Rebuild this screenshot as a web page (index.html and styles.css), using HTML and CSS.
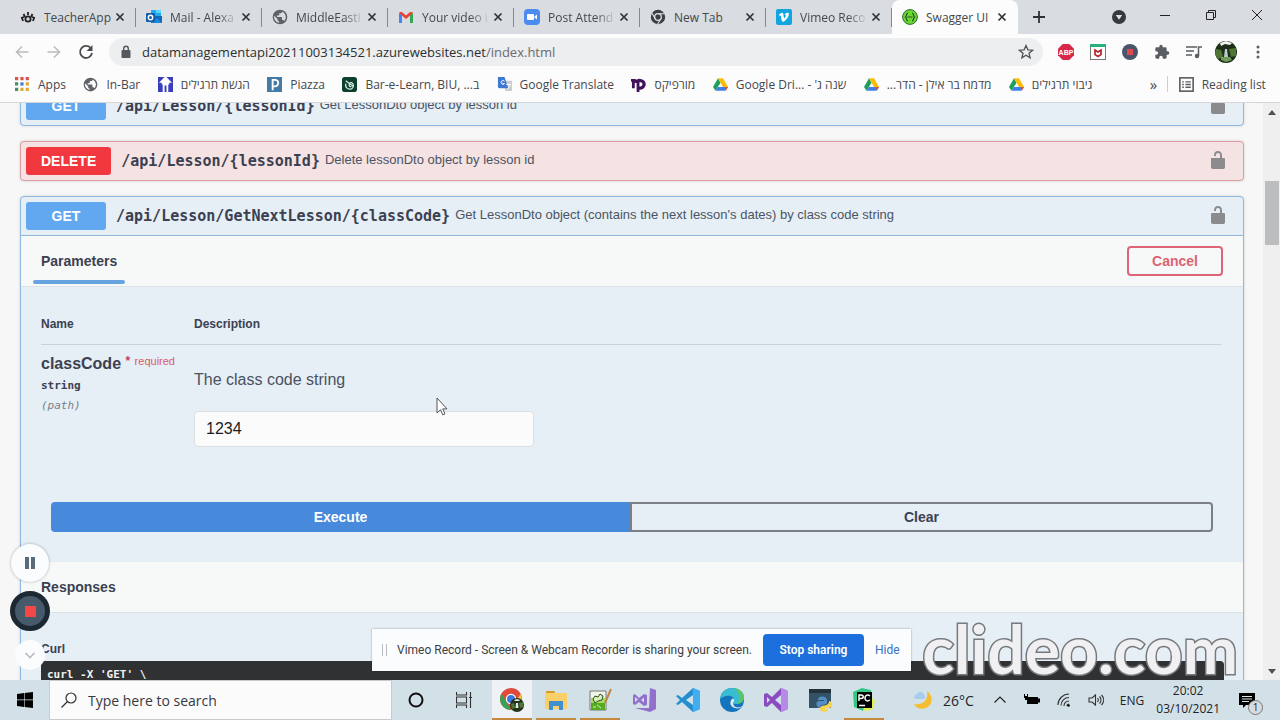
FILE: index.html
```html
<!DOCTYPE html>
<html lang="en">
<head>
<meta charset="utf-8">
<title>Swagger UI</title>
<link rel="stylesheet" href="styles.css">
</head>
<body>
<svg class="defs" aria-hidden="true">
  <symbol id="close" viewBox="0 0 10 10"><path d="M1.5 1.5l7 7M8.500 1.500l-7 7" stroke="#2f3337" stroke-width="1.700"/></symbol>
  <symbol id="globe" viewBox="0 0 24 24"><path fill="#5f6368" d="M12 1a11 11 0 100 22 11 11 0 000-22zm-1.500 19.800A9 9 0 013.300 10l5 5v1.200c0 1.200 1 2.200 2.200 2.200zm7.800-2.800c-.3-.9-1.100-1.500-2.100-1.500h-1.100v-3.400c0-.6-.5-1.100-1.100-1.100H7.500V9.800h2.300c.6 0 1.100-.5 1.100-1.100V6.500h2.200c1.200 0 2.200-1 2.200-2.200v-.5a9 9 0 013 14.200z"/></symbol>
  <symbol id="drive" viewBox="0 0 24 22"><path fill="#1e9e5a" d="M8 1L0 15l4 6L12 8z"/><path fill="#fbbc04" d="M8 1h8l8 14h-8z"/><path fill="#3f7fe8" d="M4 21l4-6h16l-4 6z"/><path fill="#e6502f" d="M18.500 15H24l-3 5z"/></symbol>
  <symbol id="unlock" viewBox="0 0 20 20"><path fill="#8b8b8d" d="M15.800 8H14V5.600C14 2.700 12.700 1 10 1 7.200 1 6 2.700 6 5.600V6h2v-.8C8 3.700 8.600 3 10 3s2 .8 2 2.200V8H4c-.6 0-1 .6-1 1.200v8.100C3 18.500 3.700 19 5 19h10c1.300 0 2-.6 2-1.800V9.200C17 8.600 16.400 8 15.800 8z"/></symbol>
</svg>

<header class="browser">
  <nav class="tabs">
    <div class="tab"><svg class="fav" viewBox="0 0 16 16"><g stroke="#222" fill="none" stroke-width="1.800"><circle cx="8" cy="10" r="2.600"/><path d="M3 12l-1-3M5 8L3.500 5M8 6V3M11 8l1.500-3M13 12l1-3M1 9l3-1M15 9l-3-1"/></g></svg><span class="tab-name">TeacherApp</span><button class="close" aria-label="Close TeacherApp"><svg><use href="#close"/></svg></button></div>
    <div class="tab"><svg class="fav" viewBox="0 0 16 16"><path fill="#28a8ea" d="M5 1h10v6H5z"/><path fill="#1068b8" d="M5 7h11v7H5z"/><path fill="#50d9ff" d="M10 1h5v3h-5z"/><path fill="#1a88dc" d="M5 14l6-5 5 5z"/><rect y="4" width="9" height="9" rx="1" fill="#0f5fae"/><circle cx="4.500" cy="8.500" r="2.200" fill="none" stroke="#fff" stroke-width="1.400"/></svg><span class="tab-name">Mail - Alexa</span><button class="close" aria-label="Close Mail"><svg><use href="#close"/></svg></button></div>
    <div class="tab"><svg class="fav"><use href="#globe"/></svg><span class="tab-name">MiddleEastI</span><button class="close" aria-label="Close MiddleEast"><svg><use href="#close"/></svg></button></div>
    <div class="tab"><svg class="fav" viewBox="0 0 16 16"><path fill="#4285f4" d="M1 4l3 2v8H1z"/><path fill="#34a853" d="M12 6l3-2v10h-3z"/><path fill="#ea4335" d="M1 4l1-1h2l4 3.500L12 3h2l1 1-7 6z"/></svg><span class="tab-name">Your video i</span><button class="close" aria-label="Close Your video"><svg><use href="#close"/></svg></button></div>
    <div class="tab"><svg class="fav" viewBox="0 0 16 16"><rect width="16" height="16" rx="4" fill="#4a8cf0"/><rect x="3" y="5" width="7" height="6" rx="1" fill="#fff"/><path fill="#fff" d="M10.500 7.500L13 5.500v5l-2.500-2z"/></svg><span class="tab-name">Post Attend</span><button class="close" aria-label="Close Post Attendee"><svg><use href="#close"/></svg></button></div>
    <div class="tab"><svg class="fav" viewBox="0 0 16 16"><circle cx="8" cy="8" r="7.200" fill="#3c4043"/><circle cx="8" cy="8" r="3.300" fill="#3c4043" stroke="#dee1e6" stroke-width="1.300"/><path d="M8 4.700h6.500M5.200 9.700L2 4.300M10.800 9.700L7.600 15" stroke="#dee1e6" stroke-width="1.100"/></svg><span class="tab-name whole">New Tab</span><button class="close" aria-label="Close New Tab"><svg><use href="#close"/></svg></button></div>
    <div class="tab"><svg class="fav" viewBox="0 0 16 16"><rect width="16" height="16" rx="2" fill="#13a5df"/><path fill="#fff" d="M3 5.800c1-1 2.300-2.200 3.300-2 1.400.2 1.200 3.500 1.700 5 .3.700.8.200 1.600-1.300.6-1.200.2-1.800-.9-1.400.6-2 2-2.700 3.300-2.400 1.400.4 1 2.300 0 4.200C11 9.800 8.500 12.700 7.200 12.700c-2 0-1.900-4.800-2.500-6-.2-.4-.6-.2-1.200.2z"/></svg><span class="tab-name">Vimeo Reco</span><button class="close" aria-label="Close Vimeo"><svg><use href="#close"/></svg></button></div>
    <div class="tab active"><svg class="fav" viewBox="0 0 16 16"><circle cx="8" cy="8" r="7.400" fill="#6bd832" stroke="#2f6b2f"/><path d="M6 4c-2 0-1 3-2.500 4C5 9 4 12 6 12M10 4c2 0 1 3 2.500 4C11 9 12 12 10 12M5.500 8h5" fill="none" stroke="#24502c" stroke-width="1.200"/></svg><span class="tab-name whole">Swagger UI</span><button class="close" aria-label="Close Swagger UI"><svg><use href="#close"/></svg></button></div>
    <button class="new-tab" aria-label="New tab"><svg viewBox="0 0 12 12"><path d="M6 0v12M0 6h12" stroke="#2f3337" stroke-width="1.800"/></svg></button>
    <div class="window-buttons">
      <button aria-label="Search tabs"><svg viewBox="0 0 14 14"><circle cx="7" cy="7" r="7" fill="#36393e"/><path fill="#dee1e6" d="M3.800 5h6.400L7 9.800z"/></svg></button>
      <button aria-label="Minimize"><svg viewBox="0 0 14 14"><path d="M2 7.500h10" stroke="#222"/></svg></button>
      <button aria-label="Restore"><svg viewBox="0 0 14 14"><path d="M2.500 4.500h7v7h-7zM4.500 4V2.500h7v7H10" fill="none" stroke="#222"/></svg></button>
      <button aria-label="Close window"><svg viewBox="0 0 14 14"><path d="M2 2l10 10M12 2L2 12" stroke="#222"/></svg></button>
    </div>
  </nav>
  <div class="toolbar">
    <button class="tool" aria-label="Back"><svg viewBox="0 0 16 16"><path d="M14.500 8H2.500M8 2.500L2.500 8 8 13.500" fill="none" stroke="#b9bbbe" stroke-width="1.500"/></svg></button>
    <button class="tool" aria-label="Forward"><svg viewBox="0 0 16 16"><path d="M1.500 8h12M8 2.500L13.500 8 8 13.500" fill="none" stroke="#b9bbbe" stroke-width="1.500"/></svg></button>
    <button class="tool" aria-label="Reload"><svg viewBox="0 0 16 16"><path d="M13 4.500A6 6 0 1014 9" fill="none" stroke="#494c50" stroke-width="1.800"/><path fill="#494c50" d="M14.500 1v6h-6z"/></svg></button>
    <div class="address">
      <svg class="padlock" viewBox="0 0 12 14"><rect x="1.500" y="5" width="9" height="8" rx="1" fill="#55585c"/><path d="M3.700 6V3.500a2.300 2.300 0 014.600 0V6" fill="none" stroke="#55585c" stroke-width="1.400"/></svg>
      <span class="url">datamanagementapi20211003134521.azurewebsites.net<span class="path">/index.html</span></span>
      <button class="star" aria-label="Bookmark"><svg viewBox="0 0 16 16"><path d="M8 1.500l1.900 4.300 4.700.4-3.600 3 1.100 4.600L8 11.300l-4.100 2.500L5 9.200l-3.600-3 4.700-.4z" fill="none" stroke="#4f5257" stroke-width="1.300"/></svg></button>
    </div>
    <button class="tool" aria-label="Adblock Plus"><svg viewBox="0 0 16 16"><path fill="#d8284a" d="M4.700 0h6.600L16 4.700v6.600L11.300 16H4.700L0 11.300V4.700z"/><text x="8" y="10.500" class="abp">ABP</text></svg></button>
    <button class="tool" aria-label="McAfee"><svg viewBox="0 0 16 16"><rect x=".5" y=".5" width="15" height="15" fill="#fff" stroke="#777"/><path fill="#27b17c" d="M0 0h16v3H0z"/><path d="M5 6v4.500l3 2 3-2V6L8 8z" fill="none" stroke="#b5272d" stroke-width="1.700"/></svg></button>
    <button class="tool" aria-label="Vimeo Record"><svg viewBox="0 0 16 16"><circle cx="8" cy="8" r="8" fill="#4a5668"/><rect x="5" y="5" width="6" height="6" fill="#e04a4f"/></svg></button>
    <button class="tool" aria-label="Extensions"><svg viewBox="0 0 24 24"><path fill="#5a5d61" d="M20.500 11H19V7a2 2 0 00-2-2h-4V3.500a2.500 2.500 0 00-5 0V5H4a2 2 0 00-2 2v3.800h1.500a2.700 2.700 0 010 5.400H2V20c0 1.100.9 2 2 2h3.800v-1.500a2.700 2.700 0 015.400 0V22H17a2 2 0 002-2v-4h1.500a2.500 2.500 0 000-5z"/></svg></button>
    <button class="tool" aria-label="Media"><svg viewBox="0 0 16 16"><path d="M0 3h11M0 7h8M0 11h6M12.500 12V3H16" fill="none" stroke="#5a5d61" stroke-width="1.500"/><circle cx="11" cy="12" r="2.200" fill="#5a5d61"/></svg></button>
    <button class="tool avatar" aria-label="Profile"><svg viewBox="0 0 22 22"><circle cx="11" cy="11" r="11" fill="#1d2d17"/><path fill="#507634" d="M1 8l5 1 2 7-5 2-3-5zM14 8l7-1v8l-5 1z"/><path fill="#f0f3f1" d="M5 2l6-2 6 2-2 2-5-1-4 2z"/><path fill="#b7cfcb" d="M10 8h2l1 8H9z"/><path fill="#719b5b" d="M6 16h9l2 3-6 2-5-2z"/></svg></button>
    <button class="tool" aria-label="Menu"><svg viewBox="0 0 16 16"><g fill="#5a5d61"><circle cx="8" cy="3" r="1.500"/><circle cx="8" cy="8" r="1.500"/><circle cx="8" cy="13" r="1.500"/></g></svg></button>
  </div>
  <nav class="bookmarks">
    <a href="#"><svg viewBox="0 0 14 14"><path fill="#d9534a" d="M0 0h3v3H0zM5 0h3v3H5zM10 0h3v3h-3z"/><path fill="#4b8b63" d="M0 5h3v3H0zM0 10h3v3H0z"/><path fill="#437bd1" d="M5 5h3v3H5z"/><path fill="#dfaa35" d="M10 5h3v3h-3zM5 10h3v3H5zM10 10h3v3h-3z"/></svg>Apps</a>
    <a href="#"><svg><use href="#globe"/></svg>In-Bar</a>
    <a href="#"><svg viewBox="0 0 16 16"><path fill="#3a3ebd" d="M0 0h7L1 6h3v2H0zM9 0h7v8h-4V6h3zM0 8h5v8H0zM11 8h5v8h-5zM7 9h2v7H7z"/></svg><bdi>הגשת תרגילים</bdi></a>
    <a href="#"><svg viewBox="0 0 16 16"><rect width="16" height="16" fill="#437aa6"/><path d="M6 14V3h2.500a3.300 3.300 0 010 7H6" fill="none" stroke="#fff" stroke-width="2"/></svg>Piazza</a>
    <a href="#"><svg viewBox="0 0 16 16"><rect width="16" height="16" rx="3" fill="#0c3f2d"/><path d="M4 4l8 6M4 7c-1 5 3 6 5 6s4-3 3-5-3-3-4-1 0 4 2 3" fill="none" stroke="#d9f1e5" stroke-width="1.300"/></svg>Bar-e-Learn, BIU, ...ב</a>
    <a href="#"><svg viewBox="0 0 16 16"><path fill="#c9cdd2" d="M6 4h10v11H9z"/><path fill="#3f78d4" d="M1 0h7l4 12H3a2 2 0 01-2-2z"/><path d="M8 4.500A2 2 0 108 7H6M10 8h5M12 7v2M11 13l3-4" fill="none" stroke="#fff"/></svg>Google Translate</a>
    <a href="#"><svg viewBox="0 0 16 16"><path fill="#41135b" d="M0 2h4a3 3 0 012 1 6 6 0 014-1 5.500 5.500 0 010 11.500H9V16H6V7c0-1-2-1-2 0v5H1V5H0z"/><path fill="#fff" d="M9 5.500h1a2.300 2.300 0 010 4.600H9z"/></svg><bdi>מורפיקס</bdi></a>
    <a href="#"><svg><use href="#drive"/></svg><bdi dir="ltr">Google Dri... - 'שנה ג</bdi></a>
    <a href="#"><svg><use href="#drive"/></svg><bdi dir="rtl">מדמח בר אילן - הדר...</bdi></a>
    <a href="#"><svg><use href="#drive"/></svg><bdi>גיבוי תרגילים</bdi></a>
    <button class="more">»</button>
    <button class="reading"><svg viewBox="0 0 14 14"><rect x=".8" y=".8" width="12.400" height="12.400" fill="none" stroke="#5a5d61" stroke-width="1.500"/><path d="M3 4.500h1.500M6 4.500h5M3 7h1.500M6 7h5M3 9.500h1.500M6 9.500h5" stroke="#5a5d61" stroke-width="1.300"/></svg>Reading list</button>
  </nav>
</header>

<div class="viewport">
  <main class="api">
    <section class="op get">
      <div class="summary"><span class="method">GET</span><span class="route">/api/Lesson/{lessonId}</span><span class="about">Get LessonDto object by lesson id</span><button class="lock" aria-label="Authorize"><svg><use href="#unlock"/></svg></button></div>
    </section>
    <section class="op delete">
      <div class="summary"><span class="method">DELETE</span><span class="route">/api/Lesson/{lessonId}</span><span class="about">Delete lessonDto object by lesson id</span><button class="lock" aria-label="Authorize"><svg><use href="#unlock"/></svg></button></div>
    </section>
    <section class="op get open">
      <div class="summary"><span class="method">GET</span><span class="route">/api/Lesson/GetNextLesson/{classCode}</span><span class="about">Get LessonDto object (contains the next lesson's dates) by class code string</span><button class="lock" aria-label="Authorize"><svg><use href="#unlock"/></svg></button></div>
      <div class="band"><h4 class="params-tab">Parameters</h4><button class="cancel">Cancel</button></div>
      <div class="params">
        <table>
          <thead><tr><th class="name-col">Name</th><th>Description</th></tr></thead>
          <tbody><tr>
            <td><label class="param" for="code">classCode <span class="star-mark">*</span> <span class="required">required</span></label><div class="type">string</div><div class="place">(path)</div></td>
            <td><p class="desc">The class code string</p><input id="code" type="text" value="1234"></td>
          </tr></tbody>
        </table>
      </div>
      <div class="actions"><button class="execute">Execute</button><button class="clear">Clear</button></div>
      <div class="band"><h4>Responses</h4></div>
      <div class="responses"><h5>Curl</h5><pre>curl -X 'GET' \</pre></div>
    </section>
  </main>
  <div class="scrollbar"><svg viewBox="0 0 8 5"><path fill="#505050" d="M0 5l4-5 4 5z"/></svg><span class="thumb"></span><svg viewBox="0 0 8 5"><path fill="#505050" d="M0 0l4 5 4-5z"/></svg></div>

  <div class="recorder">
    <button class="pause" aria-label="Pause"><svg viewBox="0 0 12 12"><path fill="#596a78" d="M1 0h4v12H1zM7 0h4v12H7z"/></svg></button>
    <button class="stop" aria-label="Stop"><span></span></button>
    <button class="fold" aria-label="Collapse"><svg viewBox="0 0 12 12"><path d="M1.500 4L6 8.500 10.500 4" fill="none" stroke="#b5bbc1" stroke-width="1.600"/></svg></button>
  </div>
  <div class="share"><span class="grip"></span><span class="share-text">Vimeo Record - Screen &amp; Webcam Recorder is sharing your screen.</span><button class="stop-share">Stop sharing</button><button class="hide">Hide</button></div>
  <div class="watermark">clideo.com</div>
  <svg class="cursor" viewBox="0 0 12 19"><path d="M1 1v15l3.500-3.300 2.300 5.200 2.200-1-2.300-5H11z" fill="#fff" stroke="#555"/></svg>
</div>

<footer class="taskbar">
  <button class="start" aria-label="Start"><svg viewBox="0 0 16 16"><path d="M0 2l7-1v6.600H0zM7.600 1L16 0v7.600H7.600zM0 8.300h7V15l-7-1zM7.600 8.300H16V16l-8.400-1z"/></svg></button>
  <label class="search"><svg viewBox="0 0 16 16"><circle cx="10" cy="6" r="5" fill="none" stroke="#333" stroke-width="1.200"/><path d="M6.500 9.500L.5 15.500" stroke="#333" stroke-width="1.300"/></svg><input type="text" placeholder="Type here to search" aria-label="Search"></label>
  <button class="sys" aria-label="Cortana"><svg viewBox="0 0 16 16"><circle cx="8" cy="8" r="6.500" fill="none" stroke="#111" stroke-width="2"/></svg></button>
  <button class="sys" aria-label="Task view"><svg viewBox="0 0 16 16"><path d="M.5 0v3h10V0M.5 5h10v6H.5zM.5 16v-3h10v3M14.500 0v16M13 5.500h3" fill="none" stroke="#333" stroke-width="1.100"/></svg></button>
  <div class="apps">
    <button class="running current" aria-label="Chrome"><svg viewBox="0 0 24 24"><circle cx="11" cy="11" r="11" fill="#e04a3d"/><path fill="#35a353" d="M1.500 5.500L11 21.900A11 11 0 011.500 5.500z"/><path fill="#f7c93a" d="M11 22l5-9 4.500-7A11 11 0 0111 22z"/><circle cx="11" cy="11" r="5.200" fill="#fff"/><circle cx="11" cy="11" r="4" fill="#3a7ae0"/><circle cx="17" cy="17" r="7" fill="#24331c"/><path fill="#507634" d="M11 16l3-1 1 5-3 1zM19 15l4-1v5l-3 1z"/><path fill="#dce8e4" d="M14 12l3-1 3 1-1 1h-4zM16 15h2l.5 5h-3z"/></svg></button>
    <button class="running" aria-label="File Explorer"><svg viewBox="0 0 24 24"><path fill="#d79a29" d="M2 3h8l2 3H2z"/><path fill="#f9d067" d="M1 5h22v16H1z"/><path fill="#418fd0" d="M5 13h14v9h-4v-4H9v4H5z"/></svg></button>
    <button class="running" aria-label="Notepad++"><svg viewBox="0 0 24 24"><path fill="#f0f5e8" stroke="#777" d="M2 3h16v19H2z"/><path fill="#a7dc5a" d="M3 10h14v6H3z"/><path fill="#55ab22" d="M3 15h14v7H3z"/><path d="M5 11l2-3 3 1 2-3 3 2-1 4-4 1-3 2z" fill="#d9f0b8" stroke="#294d2a"/><path d="M5 19h3M9 17l4 3" fill="none" stroke="#d8f2bd"/><path d="M23 1l-6 14" stroke="#bd8746" stroke-width="2"/></svg></button>
    <button aria-label="Blend"><svg viewBox="0 0 24 24"><path fill="#9270cc" d="M18 0l6 2v19l-6 3-15-4 14 0zM1 7l2-1 4 4 5-4 3 1v10l-3 1-5-4-4 3-2-1zm2 2v5l3-2.500zm9 .5L9 12l3 2.500z"/></svg></button>
    <button aria-label="VS Code"><svg viewBox="0 0 24 24"><path fill="#248fcf" d="M17 0l7 3v18l-7 3L6 14l-4 3-2-1 4-4-4-4 2-1 4 3zm0 7l-7 5 7 5z"/><path fill="#40aef0" d="M17 0l7 3v18l-7 3z"/></svg></button>
    <button aria-label="Edge"><svg viewBox="0 0 24 24"><circle cx="12" cy="12" r="12" fill="#1474bd"/><path fill="#39bcd0" d="M0 11C1 3 7 0 12 0c8 0 12 5 12 9 0 5-4 7-8 7-3 0-3-1-2-3 2-5-7-8-14-2z"/><path fill="#5bc46c" d="M14 0c6 1 10 5 10 9 0 5-4 7-7 7 4-4 3-11-3-16z"/><path fill="#dcebef" d="M14 13c-3 6 4 8 9 5-2 2-5 3-8 2-5-1-6-6-3-9 1-1 3 0 2 2z"/></svg></button>
    <button aria-label="Visual Studio"><svg viewBox="0 0 24 24"><path fill="#8c4cc1" d="M17 0l7 3v18l-7 3-9-9-5 4-3-1V6l3-1 5 4zm0 7l-6 5 6 5zM3 9v6l3-3z"/><path fill="#b58be5" d="M17 0l7 3v18l-7 3z"/></svg></button>
    <button aria-label="Python"><svg viewBox="0 0 24 24"><path fill="#345266" d="M1 1h22v19H1z"/><path fill="#22313b" d="M1 1h22v4H1z"/><path fill="#528ec5" d="M10 12c0-5 9-4 9 0v3c0 3-7 0-7 5-4 0-5-7-1-7h5v-1z"/><path fill="#f7d44f" d="M21 13c4 0 4 7 0 7h-4v1h3c0 4-8 4-8 0 0-6 9-1 9-8z"/></svg></button>
    <button class="running" aria-label="PyCharm"><svg viewBox="0 0 24 24"><path fill="#32c985" d="M1 4L10 0l9 2 1 9-9 12-9-4z"/><path fill="#e5ef4c" d="M16 6l7 7-3 9-9 1z"/><path d="M5 4h15v16H5z"/><path d="M7 13V7h2c3 0 3 3.500 0 3.500H7M18 8c-3-2-5-.5-5 2s2 4 5 2M7 17.500h6" fill="none" stroke="#fff" stroke-width="1.500"/></svg></button>
  </div>
  <div class="tray">
    <button class="weather"><svg viewBox="0 0 20 20"><path fill="#f5bd32" d="M14 1c6 4 6 12 1 16-5 3-12 2-14-3 9 2 15-5 13-13z"/><path fill="#a8cceb" d="M2 9a3 3 0 012-5c2-4 7-2 7 1 2 1 1 4 0 4z"/></svg>26°C</button>
    <button aria-label="Show hidden icons"><svg viewBox="0 0 16 16"><path d="M2.500 10.500L8 5l5.500 5.500" fill="none" stroke="#222" stroke-width="1.200"/></svg></button>
    <button aria-label="Battery"><svg viewBox="0 0 16 16"><path d="M3 5h11v1.500h2v4h-2V12H3zM0 2h1v2h2V2h1v4H3v2H1V6H0z"/></svg></button>
    <button aria-label="Network"><svg viewBox="0 0 16 16"><path d="M2 13C2 7 7 2 13 2M5 13.500C5 9 8.500 5.500 13 5.500M8 14c0-3 2-5 5-5M11 14c0-1.200.8-2 2-2" fill="none" stroke="#333" stroke-width="1.100"/><circle cx="12.500" cy="13.500" r="1.300"/></svg></button>
    <button aria-label="Volume"><svg viewBox="0 0 16 16"><path d="M1 6h3l3.500-3v10L4 10H1zM9.500 6c1 1.200 1 2.800 0 4M11.500 4.500c2 2 2 5 0 7M13.500 3c2.800 3 2.800 7 0 10" fill="none" stroke="#333" stroke-width="1.100"/></svg></button>
    <span class="lang">ENG</span>
    <time class="clock"><span>20:02</span><span>03/10/2021</span></time>
    <button class="notices" aria-label="Notifications"><svg viewBox="0 0 16 16"><path d="M0 1h16v12h-9l-3 3v-3H0z"/><path d="M3 4.500h10M3 7h10M3 9.500h7" stroke="#dbe5ea"/></svg><span class="count">1</span></button>
  </div>
</footer>
</body>
</html>
```
FILE: styles.css
```css
* { box-sizing: border-box; }
body {
  margin: 0;
  height: 100vh;
  display: flex;
  flex-direction: column;
  overflow: hidden;
  background: #f7f7f8;
  color: #3b4151;
  font-family: "Liberation Sans", Arial, sans-serif;
}
button { margin: 0; padding: 0; border: 0; background: none; font: inherit; color: inherit; }
button svg, .tab svg { display: block; }
h4, h5, p, pre { margin: 0; }
.defs { position: absolute; width: 0; height: 0; }

/* Browser chrome */
.browser { flex: none; font-family: "Open Sans", "Noto Sans", "Liberation Sans", sans-serif; font-size: 12px; color: #45484c; background: #fcfcfd; border-bottom: 1px solid #d4d6d9; }
.tabs { display: flex; height: 34px; padding-left: 10px; background: #d9dce1; }
.tab { display: flex; align-items: center; flex: 0 1 126px; min-width: 0; height: 34px; padding: 0 11px 0 10px; position: relative; }
.tab:not(.active)::after { content: ""; position: absolute; right: 0; top: 8px; width: 1px; height: 19px; background: #85888d; }
.tab.active { background: #fcfcfd; border-radius: 8px 8px 0 0; }
.fav { width: 16px; height: 16px; flex: none; }
.tab-name { flex: 1; min-width: 0; margin: 0 3px 0 8px; overflow: hidden; white-space: nowrap; mask-image: linear-gradient(90deg, #000 70%, transparent); }
.tab:first-child .tab-name, .tab-name.whole { mask-image: none; }
.close svg { width: 10px; height: 10px; }
.new-tab { width: 42px; display: grid; place-items: center; }
.new-tab svg { width: 12px; height: 12px; }
.window-buttons { margin-left: auto; display: flex; height: 30px; }
.window-buttons button { width: 46px; display: grid; place-items: center; }
.window-buttons svg { width: 14px; height: 14px; }
.window-buttons button:first-child { height: 34px; }
.toolbar { display: flex; align-items: center; height: 36px; padding: 0 6px; }
.tool { width: 32px; height: 32px; flex: none; display: grid; place-items: center; }
.tool svg { width: 16px; height: 16px; }
.tool.avatar svg { width: 22px; height: 22px; }
.abp { font: bold 7px "Liberation Sans", sans-serif; fill: #fff; text-anchor: middle; }
.address { flex: 1; display: flex; align-items: center; height: 28px; margin: 0 7px; padding: 0 9px 0 11px; border-radius: 14px; background: #eceeef; }
.padlock { width: 12px; height: 14px; }
.url { flex: 1; margin-left: 10px; font-size: 13px; color: #2c2e31; }
.path { color: #696c70; }
.star svg { width: 16px; height: 16px; }
.bookmarks { display: flex; justify-content: space-between; align-items: center; height: 32px; padding: 0 14px 4px 15px; gap: 8px; white-space: nowrap; }
.bookmarks a { display: flex; align-items: center; gap: 8px; color: inherit; text-decoration: none; }
.bookmarks svg { width: 15px; height: 15px; flex: none; }
.more { padding-left: 40px; font-size: 15px; line-height: 18px; }
.reading { display: flex; align-items: center; gap: 8px; height: 16px; margin-left: -8px; padding-left: 11px; border-left: 1px solid #cbcdd0; }

/* API page */
.viewport { flex: 1; min-height: 0; display: flex; position: relative; overflow: hidden; }
.api { flex: 1; min-width: 0; margin-top: -17px; padding: 0 19px 0 20px; }
.op { margin-bottom: 15px; border: 1px solid #8fb8e2; border-radius: 4px; background: #e6eef6; box-shadow: 0 0 3px rgba(0, 0, 0, .16); }
.op.delete { border-color: #dd9ca2; background: #f5e2e2; }
.summary { display: flex; align-items: center; padding: 5px; height: 38px; }
.method { min-width: 80px; padding: 6px 15px; border-radius: 3px; background: #62a8f1; color: #fff; font-size: 14px; line-height: 16px; font-weight: bold; text-align: center; }
.delete .method { background: #f1383f; }
.route { margin: 0 5px 0 10px; font: bold 15px/20px "DejaVu Sans Mono", monospace; }
.about { flex: 1; font-size: 13px; line-height: 16px; padding-bottom: 2px; color: #4c5463; white-space: nowrap; }
.lock { margin-right: 10px; padding-bottom: 3px; }
.lock svg { width: 20px; height: 20px; }
.open .summary { height: 39px; border-bottom: 1px solid #8fb4d8; }
.band { display: flex; align-items: center; justify-content: space-between; height: 51px; padding: 0 20px; background: #f7f9f9; border-bottom: 1px solid #dce1e6; }
.band h4 { font-size: 14px; line-height: 18px; }
.params-tab { position: relative; }
.params-tab::after { content: ""; position: absolute; left: -8px; right: -8px; bottom: -14px; height: 4px; border-radius: 2px; background: #67a4df; }
.cancel { width: 96px; height: 30px; border: 2px solid #dd6577; border-radius: 4px; color: #dc6373; font-size: 14px; font-weight: bold; }
.params { padding: 20px 22px 0 20px; }
table { width: 100%; border-collapse: collapse; }
th { padding: 10px 0 13px; border-bottom: 1px solid #c9d2db; font-size: 12px; line-height: 14px; text-align: left; }
.name-col { width: 153px; }
td { padding: 10px 0 0; vertical-align: top; }
.param { display: block; font-size: 16px; line-height: 18px; font-weight: bold; white-space: nowrap; }
.star-mark, .required { font-size: 11px; vertical-align: 4px; line-height: 10px; color: #dc5a6b; }
.star-mark { font-size: 12px; color: #c33f5c; }
.required { font-weight: normal; }
.type, .place { margin-top: 6px; font: bold 11px/14px "DejaVu Sans Mono", monospace; }
.place { font-style: italic; font-weight: normal; color: #777f8a; }
.desc { margin: 16px 0 22px; font-size: 16px; line-height: 18px; color: #4a525e; }
td input { display: block; width: 340px; height: 36px; padding: 0 11px; border: 1px solid #dcdee2; border-radius: 4px; background: #fbfbfc; color: #1c1c1e; font: 16px "Liberation Sans", sans-serif; }
.actions { display: flex; padding: 55px 30px 30px; }
.actions button { flex: 1; height: 30px; font-size: 14px; font-weight: bold; }
.execute { border-radius: 4px 0 0 4px; background: #478adb; color: #fff; }
.clear { border: 2px solid #7c8086; border-radius: 0 4px 4px 0; }
.responses { padding: 29px 19px 30px 20px; }
h5 { font-size: 12px; line-height: 14px; margin-bottom: 5px; }
pre { padding: 6px; border-radius: 4px; background: #303132; color: #f2f2f2; font: bold 11px/15px "DejaVu Sans Mono", monospace; white-space: pre; }
.scrollbar { flex: none; width: 17px; padding: 7px 0 6px; display: flex; flex-direction: column; align-items: center; background: #efeff0; }
.scrollbar svg { width: 8px; height: 5px; }
.thumb { width: 14px; height: 64px; margin: 66px 0 auto; background: #bcbdbe; }

/* Overlays on the page */
.recorder { position: absolute; left: 10px; bottom: 10px; display: flex; flex-direction: column; align-items: center; gap: 9px; }
.recorder button { display: grid; place-items: center; border-radius: 50%; background: #fbfcfd; }
.recorder svg { width: 12px; height: 12px; }
.pause { width: 38px; height: 38px; box-shadow: 0 0 3px rgba(0, 0, 0, .3); }
.recorder .stop { width: 40px; height: 40px; border: 5px solid #1d2932; background: #465a6c; }
.stop span { width: 11px; height: 11px; background: #f44747; }
.fold { width: 30px; height: 30px; }
.share { position: absolute; left: 372px; bottom: 9px; display: flex; align-items: center; height: 42px; padding: 0 11px 0 10px; background: #fbfcfe; box-shadow: 0 0 2px rgba(0, 0, 0, .35); font: 12px Roboto, "Noto Sans", sans-serif; color: #3c4043; white-space: nowrap; }
.grip { width: 5px; height: 12px; margin-right: 10px; border: 1px solid #b8babd; border-width: 0 1px; }
.stop-share { width: 101px; height: 32px; margin-left: 11px; border-radius: 4px; background: #1c6fdd; color: #fff; font-weight: 600; }
.hide { margin-left: 11px; color: #3a6fc4; }
.watermark { position: absolute; right: 42px; bottom: -9px; font: bold 66px/80px Lato, sans-serif; color: #f0f0f2; -webkit-text-stroke: 3px #77797c; paint-order: stroke fill; }
.cursor { position: absolute; left: 436px; top: 294px; width: 12px; height: 19px; }

/* Taskbar */
.taskbar { flex: none; display: flex; height: 40px; background: #d2e0e7; font-family: "Open Sans", "Noto Sans", sans-serif; font-size: 12px; color: #1f2326; }
.taskbar button { display: grid; place-items: center; }
.start { width: 49px; }
.start svg, .search svg, .sys svg { width: 16px; height: 16px; }
.search { flex: 0 1 343px; display: flex; align-items: center; padding: 0 11px; gap: 11px; background: #fbfbfc; border: 1px solid #c8cccf; }
.search input { flex: 1; min-width: 0; padding: 0; border: 0; background: none; font: 14px "Open Sans", "Noto Sans", sans-serif; }
.search input::placeholder { color: #37393c; opacity: 1; }
.sys { width: 48px; }
.apps { display: flex; margin-left: 4px; }
.apps button { width: 40px; margin-right: 4px; padding-top: 2px; border-bottom: 2px solid transparent; }
.apps svg { width: 24px; height: 24px; }
.apps .running { border-bottom-color: #c4893e; }
.apps .current { background: #eef2f4; }
.tray { margin-left: auto; display: flex; align-items: center; padding-right: 16px; }
.tray > button { width: 32px; height: 40px; }
.tray svg { width: 16px; height: 16px; }
.tray .weather { display: flex; align-items: center; gap: 10px; width: auto; margin-right: 10px; font-size: 14px; }
.tray .weather svg { width: 20px; height: 20px; }
.lang { margin: 0 12px 0 8px; }
.clock { display: flex; flex-direction: column; align-items: center; line-height: 18px; }
.tray .notices { position: relative; width: 34px; margin-left: 10px; }
.count { position: absolute; right: 1px; bottom: 5px; width: 15px; height: 15px; border: 1px solid #777; border-radius: 50%; background: #d8dcde; font-size: 10px; line-height: 13px; }
```
